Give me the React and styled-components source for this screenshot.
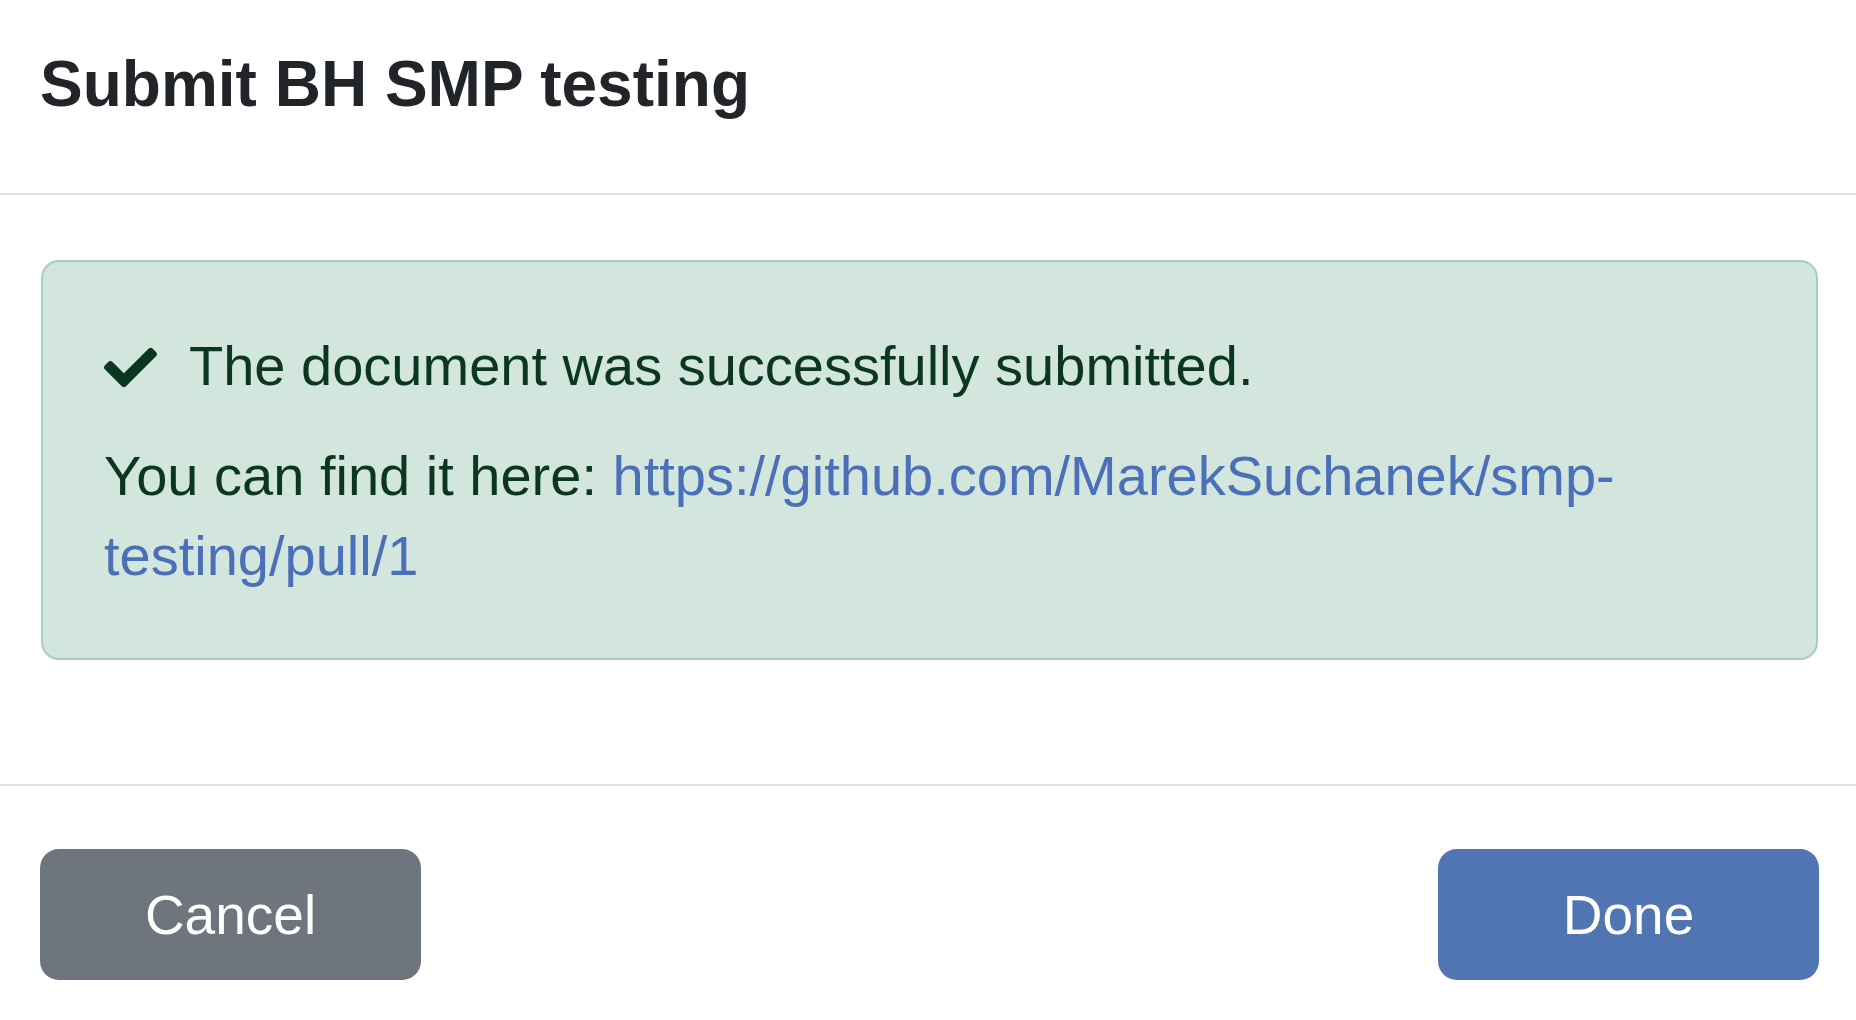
import React from "react";
import styled, { createGlobalStyle } from "styled-components";
import { FaCheck } from "react-icons/fa";

const Global = createGlobalStyle`
  html, body {
    margin: 0;
    padding: 0;
    background: #fff;
  }
  body {
    font-family: "Liberation Sans", Arial, sans-serif;
    color: #212529;
  }
`;

export default function App() {
  return (
    <>
      <Global />
      <Modal>
        <Header>
          <Title>Submit BH SMP testing</Title>
        </Header>
        <Body>
          <Alert>
            <Lead>
              <FaCheck size={53} />
              <span>The document was successfully submitted.</span>
            </Lead>
            <Text>
              You can find it here:{" "}
              <Link href="#">https://github.com/MarekSuchanek/smp-testing/pull/1</Link>
            </Text>
          </Alert>
        </Body>
        <Footer>
          <Button variant="secondary">Cancel</Button>
          <Button variant="primary">Done</Button>
        </Footer>
      </Modal>
    </>
  );
}

const Modal = styled.div`
  width: 100%;
  min-height: 100vh;
  display: flex;
  flex-direction: column;
`;

const Header = styled.div`
  padding: 44px 40px 0 40px;
  height: 149px;
  border-bottom: 2px solid #dee2e6;
`;

const Title = styled.h5`
  margin: 0;
  font-size: 64px;
  font-weight: 700;
  line-height: 81px;
  color: #212529;
`;

const Body = styled.div`
  padding: 65px 38px 0 41px;
  height: 524px;
`;

const Alert = styled.div`
  background: #d3e6dd;
  border: 2px solid #a7cfbc;
  border-radius: 18px;
  color: #0a3622;
  padding: 64px 62px 62px 61px;
  font-size: 56px;
  line-height: 80px;
`;

const Lead = styled.p`
  margin: 0 0 30px 0;
  display: flex;
  align-items: center;
  gap: 32px;
  svg {
    flex: none;
    margin-top: 2px;
  }
`;

const Text = styled.p`
  margin: 0;
`;

const Link = styled.a`
  color: #4b6fb8;
  text-decoration: none;
`;

const Footer = styled.div`
  border-top: 2px solid #dee2e6;
  padding: 63px 37px 0 40px;
  display: flex;
  justify-content: space-between;
`;

const Button = styled.button`
  width: 381px;
  height: 131px;
  border: none;
  border-radius: 19px;
  font-family: "Liberation Sans", Arial, sans-serif;
  font-size: 55px;
  color: #fff;
  background: ${(p) => (p.variant === "primary" ? "#5174b3" : "#6e757d")};
  cursor: pointer;
`;
